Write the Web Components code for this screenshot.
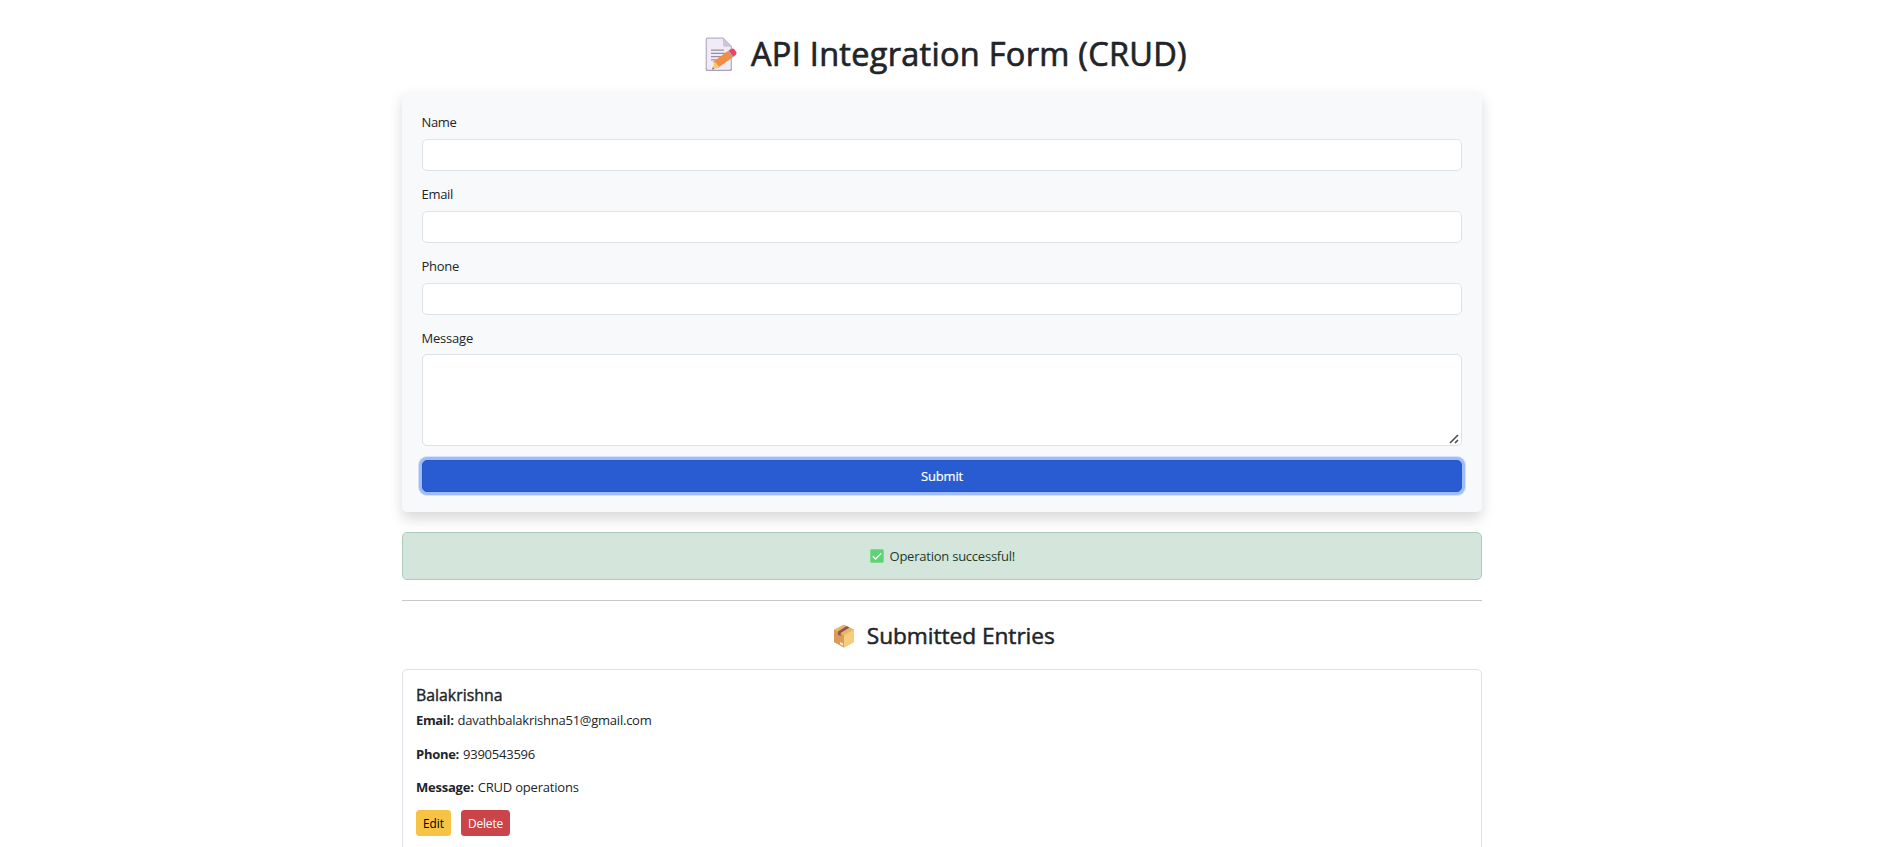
<!DOCTYPE html>
<html lang="en"><head><meta charset="utf-8"><title>API Integration Form (CRUD)</title>
<style>
body{margin:0;background:#fff;color:#212529;font:400 13px/20px "Open Sans","Noto Sans",sans-serif;overflow:hidden}
</style></head><body>
<crud-page></crud-page>
<script>
const define=(name,html,setup)=>customElements.define(name,class extends HTMLElement{
  constructor(){super();this.attachShadow({mode:'open'}).innerHTML=html;}
  connectedCallback(){if(setup)setup(this,this.shadowRoot);}
});

// Text set to an exact advance width by adjusting its tracking.
define('fit-text','<style>:host{display:inline-block;white-space:pre}</style><slot></slot>',el=>{
  el.style.letterSpacing='0';
  const target=+el.getAttribute('w'),n=el.textContent.length;
  const natural=el.getBoundingClientRect().width;
  el.style.letterSpacing=(target-natural)/n+'px';
});

define('icon-memo',`<style>:host{display:block;width:32px;height:35px}svg{display:block}</style>
<svg width="32" height="35" viewBox="0 0 32 35"><path d="M2.5 1.2H18L26.3 9.5V32q0 1.3-1.3 1.3H2.8q-1.5 0-1.5-1.5V2.6q0-1.4 1.2-1.4z" fill="#f0ebf7" stroke="#b9b0c4" stroke-width="1.3"/><path d="M18 1v7q0 1.7 1.7 1.7h7z" fill="#cdc4d8"/><path d="M1.3 31.5q0 2 1.5 2H25q1.4 0 1.4-2" fill="none" stroke="#aaa0b5" stroke-width="1.2"/><path d="M6 13.2h13M6 16.4h15M6 19.6h12M6 22.8h8" stroke="#998ea5" stroke-width="1.2"/><path d="M23.6 13.6l4.8 6.1-15.6 11.2-4.8-6z" fill="#f58c43"/><path d="M9.6 24.2l4.7 5.7-5.5 2.1-1.5.5.7-2.4z" fill="#f6c978"/><path d="M7.7 30.2l1.6 1.7-2.1.6z" fill="#6e5651"/><path d="M22.6 14.6l1.8-1.4 4.6 5.9-1.8 1.4z" fill="#b1a5ba"/><path d="M23.8 13.6l2.3-1.6q1.8-1 3.4.5l1.6 2.2q1.1 1.8-.5 3.3l-2.4 1.7z" fill="#ec4264"/></svg>`);

define('icon-package',`<style>:host{display:block;width:22px;height:24px}svg{display:block}</style>
<svg width="22" height="24" viewBox="0 0 22 24"><path d="M11 .7L21 5.8V18L11 23.5 1 18V5.8z" fill="#e9b568"/><path d="M1 5.8L11 11v12.5L1 18z" fill="#db9d55"/><path d="M11 .7L21 5.8 11 11 1 5.8z" fill="#e6b56e"/><path d="M11 11l10-5.2V18l-10 5.5z" fill="#f5cd7d"/><path d="M13.6 2l3 1.6-8.9 5.5v3l-2.8-1.4V7.5z" fill="#905849"/><path d="M7 18l3 1.4v2.3L7 20.2z" fill="#f0e9ee"/></svg>`);

define('icon-check',`<style>:host{display:block;width:14px;height:14px}svg{display:block}</style>
<svg width="14" height="14" viewBox="0 0 14 14"><rect x=".5" y=".5" width="13" height="13" rx="1" fill="#5fd278" stroke="#78dd8b"/><path d="M2.8 7.2l2.7 2.7 5.8-5.7" fill="none" stroke="#f1fff1" stroke-width="1.4"/></svg>`);

define('form-field',`<style>:host{display:flex;flex-direction:column;gap:7px;margin-bottom:13px;position:relative}
:host([multiline]){gap:6px;margin-bottom:14px}
label{display:block;height:20px;margin-left:-.5px}
input,textarea{box-sizing:border-box;width:100%;height:32px;margin:0;border:1px solid #dee2e6;border-radius:5px;background:#fff;display:block;outline:0;padding:5px 10px;font:inherit}
textarea{height:92px;resize:none}
svg{position:absolute;right:3px;bottom:2px}</style><label><slot></slot></label>`,(el,r)=>{
  const multi=el.hasAttribute('multiline');
  r.append(document.createElement(multi?'textarea':'input'));
  if(multi)r.lastChild.insertAdjacentHTML('afterend','<svg width="10" height="10" viewBox="0 0 10 10"><path d="M1 9L9 1M6 9L9 6" fill="none" stroke="#4c4c4c" stroke-width="1.6"/></svg>');
});

define('submit-button',`<style>:host{display:block}button{box-sizing:border-box;display:flex;justify-content:center;width:100%;height:32px;align-items:center;padding:0;border:1px solid #2657c7;border-radius:5px;background:#295cd0;color:#fff;font:inherit;-webkit-text-stroke:.2px;box-shadow:0 0 0 3px #9fbbf9,0 0 0 4px #d5e2fb}</style><button type="button"><slot></slot></button>`);

define('form-panel',`<style>:host{display:block;box-sizing:border-box;height:420px;padding:20px;border-radius:5px;background:#f8f9fb;box-shadow:0 6.67px 13.33px rgba(0,0,0,.15)}</style><slot></slot>`);

define('success-alert',`<style>:host{box-sizing:border-box;display:flex;align-items:center;justify-content:center;gap:5.5px;height:48px;margin-top:20px;padding-left:1px;border:1px solid #a9cfbc;border-radius:5px;background:#d4e6dc;color:#1c3a2b}</style><icon-check></icon-check><slot></slot>`);

define('small-button',`<style>:host{display:block}button{box-sizing:border-box;height:26px;padding:1px 7px 0;border:0;border-radius:3.5px;background:var(--fill);color:var(--ink);font:inherit;font-size:11.9px;line-height:25px;display:block}</style><button type="button"><slot></slot></button>`);

define('entry-card',`<style>:host{display:block;box-sizing:border-box;height:200px;padding:13px;border:1px solid #dee2e6;border-radius:5px}
h5{margin:0;padding:2px 0 5px;font-size:15.8px;line-height:20px;font-weight:500;-webkit-text-stroke:.4px}
.rows{display:grid;gap:13.5px}.actions{display:flex;gap:10px;margin-top:13px}</style>
<h5><slot name="title"></slot></h5><div class="rows"><slot></slot></div><div class="actions"><slot name="actions"></slot></div>`);

define('entry-row',`<style>:host{display:flex;gap:4px;height:20px}b{font-weight:700}</style><b><slot name="key"></slot></b><slot></slot>`);

define('crud-page',`<style>
:host{display:block;width:1080px;margin-left:402px}
h1,h2{display:flex;justify-content:center;align-items:center;margin:0;font-weight:500}
h1{height:40px;padding:34px 0 18px 8px;font-size:32.5px;line-height:40px;gap:14px;-webkit-text-stroke:.7px}
h2{height:28px;margin:21px 0 19px;font-size:22.7px;line-height:28px;gap:12px;padding-left:3.5px;-webkit-text-stroke:.5px}
hr{height:1px;border:0;margin:20px 0 0;background:#c7c8ca}
</style>
<h1><icon-memo></icon-memo><fit-text w="436">API Integration Form (CRUD)</fit-text></h1>
<form-panel>
<form-field><fit-text w="35">Name</fit-text></form-field>
<form-field><fit-text w="31.5">Email</fit-text></form-field>
<form-field><fit-text w="37.5">Phone</fit-text></form-field>
<form-field multiline><fit-text w="51.5">Message</fit-text></form-field>
<submit-button><fit-text w="42">Submit</fit-text></submit-button>
</form-panel>
<success-alert><fit-text w="125.5">Operation successful!</fit-text></success-alert>
<hr>
<h2><icon-package></icon-package><fit-text w="188">Submitted Entries</fit-text></h2>
<entry-card>
<fit-text slot="title" w="86.5">Balakrishna</fit-text>
<entry-row><fit-text slot="key" w="37.5">Email:</fit-text><fit-text w="194">davathbalakrishna51@gmail.com</fit-text></entry-row>
<entry-row><fit-text slot="key" w="43">Phone:</fit-text><fit-text w="72">9390543596</fit-text></entry-row>
<entry-row><fit-text slot="key" w="57.7">Message:</fit-text><fit-text w="101">CRUD operations</fit-text></entry-row>
<small-button slot="actions" style="--fill:#f6c344;--ink:#000"><fit-text w="21">Edit</fit-text></small-button>
<small-button slot="actions" style="--fill:#cb444a;--ink:#fff"><fit-text w="35">Delete</fit-text></small-button>
</entry-card>`);
</script></body></html>
